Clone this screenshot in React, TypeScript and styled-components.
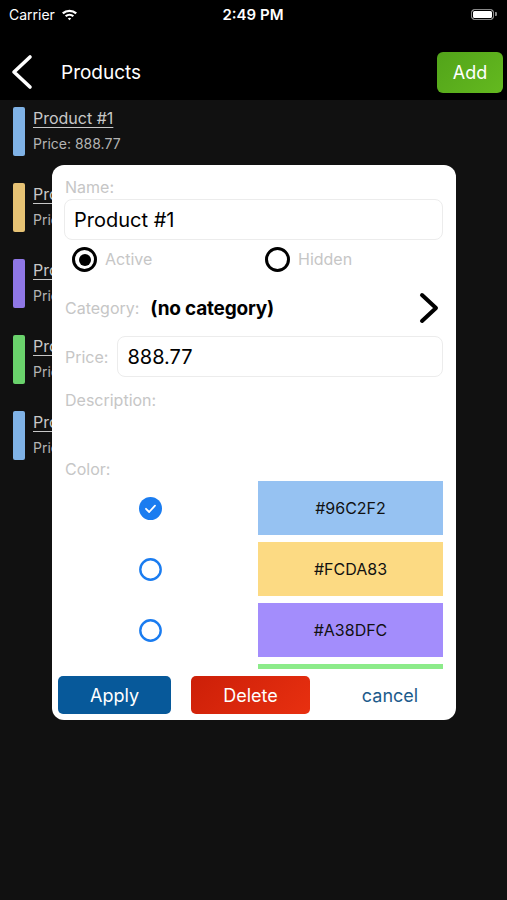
import React from 'react';
import styled, { createGlobalStyle } from 'styled-components';

type Product = { name: string; price: string; color: string };

const products: Product[] = [
    { name: 'Product #1', price: '888.77', color: '#7fb2e6' },
    { name: 'Product #2', price: '12.00', color: '#e6c274' },
    { name: 'Product #3', price: '45.10', color: '#8f77e6' },
    { name: 'Product #4', price: '9.99', color: '#6ad26c' },
    { name: 'Product #5', price: '3.50', color: '#7fb2e6' },
];

const swatches = ['#96C2F2', '#FCDA83', '#A38DFC', '#8CEB8A'];

const App: React.FC = () => {
    return (
        <Screen>
            <GlobalStyle />
            <StatusBar>
                <Carrier>
                    Carrier
                    <svg width="17" height="13" viewBox="0 0 17 13">
                        <path d="M1 4.6 A11 11 0 0 1 16 4.6 L14.4 6.2 A8.7 8.7 0 0 0 2.6 6.2 Z" fill="#fff" />
                        <path d="M3.9 7.5 A7 7 0 0 1 13.1 7.5 L11.5 9.1 A4.7 4.7 0 0 0 5.5 9.1 Z" fill="#fff" />
                        <path d="M6.8 10.4 A2.8 2.8 0 0 1 10.2 10.4 L8.5 12.2 Z" fill="#fff" />
                    </svg>
                </Carrier>
                <Clock>2:49 PM</Clock>
                <Battery>
                    <BatteryBody />
                    <BatteryNub />
                </Battery>
            </StatusBar>

            <NavBar>
                <BackButton>
                    <svg width="24" height="36" viewBox="0 0 24 36">
                        <polyline points="20,3 4,18 20,33" fill="none" stroke="#fff" strokeWidth="3.6" strokeLinecap="round" strokeLinejoin="round" />
                    </svg>
                </BackButton>
                <NavTitle>Products</NavTitle>
                <AddButton>Add</AddButton>
            </NavBar>

            <Content>
                {products.map((p) => (
                    <ListItem key={p.name}>
                        <ColorBar color={p.color} />
                        <ItemText>
                            <ItemName>{p.name}</ItemName>
                            <ItemPrice>Price: {p.price}</ItemPrice>
                        </ItemText>
                    </ListItem>
                ))}
            </Content>

            <Modal>
                <Label>Name:</Label>
                <TextBox>Product #1</TextBox>

                <RadioRow>
                    <RadioOption>
                        <Radio checked />
                        <RadioLabel>Active</RadioLabel>
                    </RadioOption>
                    <RadioOption>
                        <Radio />
                        <RadioLabel>Hidden</RadioLabel>
                    </RadioOption>
                </RadioRow>

                <CategoryRow>
                    <Label>Category:</Label>
                    <CategoryValue>(no category)</CategoryValue>
                    <svg width="22" height="32" viewBox="0 0 22 32">
                        <polyline points="4,3 18,16 4,29" fill="none" stroke="#000" strokeWidth="4" strokeLinecap="round" strokeLinejoin="round" />
                    </svg>
                </CategoryRow>

                <PriceRow>
                    <Label>Price:</Label>
                    <TextBox>888.77</TextBox>
                </PriceRow>

                <Label>Description:</Label>
                <DescriptionArea />

                <Label>Color:</Label>
                <ColorList>
                    {swatches.map((c, i) => (
                        <ColorRow key={c}>
                            <CheckCell>
                                {i === 0 ? (
                                    <svg width="23" height="23" viewBox="0 0 23 23">
                                        <circle cx="11.5" cy="11.5" r="11.5" fill="#1a7cf0" />
                                        <polyline points="7,11.8 10.2,15 16,8.6" fill="none" stroke="#fff" strokeWidth="1.8" strokeLinecap="round" strokeLinejoin="round" />
                                    </svg>
                                ) : (
                                    <svg width="23" height="23" viewBox="0 0 23 23">
                                        <circle cx="11.5" cy="11.5" r="10.2" fill="none" stroke="#1a7cf0" strokeWidth="2.4" />
                                    </svg>
                                )}
                            </CheckCell>
                            <Swatch color={c}>{c}</Swatch>
                        </ColorRow>
                    ))}
                </ColorList>

                <ButtonRow>
                    <ActionButton variant="apply">Apply</ActionButton>
                    <ActionButton variant="delete">Delete</ActionButton>
                    <CancelButton>cancel</CancelButton>
                </ButtonRow>
            </Modal>
        </Screen>
    );
};

export default App;

const GlobalStyle = createGlobalStyle`
    body {
        margin: 0;
        background: #000;
        font-family: Inter, "Liberation Sans", sans-serif;
    }
`;

const Screen = styled.div`
    position: relative;
    width: 507px;
    height: 900px;
    display: flex;
    flex-direction: column;
    background: #000;
    overflow: hidden;
`;

const StatusBar = styled.div`
    height: 28px;
    display: flex;
    align-items: center;
    justify-content: space-between;
    padding: 0 10px 0 9px;
    color: #fff;
    font-size: 14px;
`;

const Carrier = styled.div`
    display: flex;
    align-items: center;
    gap: 6px;
    width: 110px;
`;

const Clock = styled.div`
    font-weight: 600;
    font-size: 15px;
`;

const Battery = styled.div`
    width: 110px;
    display: flex;
    justify-content: flex-end;
    align-items: center;
    gap: 1px;
`;

const BatteryBody = styled.div`
    width: 21px;
    height: 9px;
    border: 1.5px solid #888;
    border-radius: 3.5px;
    background: #fff;
    box-shadow: inset 0 0 0 1px #000;
`;

const BatteryNub = styled.div`
    width: 2px;
    height: 4px;
    background: #888;
    border-radius: 0 1px 1px 0;
`;

const NavBar = styled.div`
    height: 72px;
    box-sizing: border-box;
    padding: 16px 4px 0 10px;
    display: flex;
    align-items: center;
`;

const BackButton = styled.div`
    display: flex;
    width: 51px;
`;

const NavTitle = styled.div`
    flex: 1;
    color: #fff;
    font-size: 19px;
`;

const AddButton = styled.button`
    width: 66px;
    height: 41px;
    border: none;
    border-radius: 6px;
    background: linear-gradient(135deg, #52a41a, #64b91f);
    color: #fff;
    font-family: inherit;
    font-size: 18px;
`;

const Content = styled.div`
    flex: 1;
    background: #111;
    padding-top: 7px;
`;

const ListItem = styled.div`
    height: 76px;
    display: flex;
    gap: 8px;
    padding-left: 13px;
`;

const ColorBar = styled.div<{ color: string }>`
    width: 12px;
    height: 49px;
    border-radius: 2px;
    background: ${(p) => p.color};
`;

const ItemText = styled.div`
    display: flex;
    flex-direction: column;
    gap: 7px;
    padding-top: 1px;
`;

const ItemName = styled.div`
    color: #c8c8c8;
    font-size: 16px;
    text-decoration: underline;
    text-underline-offset: 3px;
`;

const ItemPrice = styled.div`
    color: #b4b4b4;
    font-size: 14px;
`;

const Modal = styled.div`
    position: absolute;
    left: 52px;
    top: 165px;
    width: 404px;
    height: 555px;
    box-sizing: border-box;
    padding: 12px 13px 6px 12px;
    background: #fff;
    border-radius: 12px;
    display: flex;
    flex-direction: column;
`;

const Label = styled.div`
    color: #c6c6c6;
    font-size: 16px;
    line-height: 20px;
    padding-left: 1px;
`;

const TextBox = styled.div`
    flex: 1;
    height: 41px;
    box-sizing: border-box;
    margin-top: 2px;
    padding-left: 9px;
    display: flex;
    align-items: center;
    border: 1px solid #ececec;
    border-radius: 8px;
    font-size: 20px;
    color: #000;
`;

const RadioRow = styled.div`
    display: grid;
    grid-template-columns: 193px 1fr;
    padding-left: 8px;
    margin-top: 7px;
`;

const RadioOption = styled.div`
    display: flex;
    align-items: center;
    gap: 8px;
`;

const Radio = styled.div<{ checked?: boolean }>`
    width: 25px;
    height: 25px;
    box-sizing: border-box;
    border: 3px solid #000;
    border-radius: 50%;
    display: flex;
    align-items: center;
    justify-content: center;
    &::after {
        content: '';
        width: 12px;
        height: 12px;
        border-radius: 50%;
        background: ${(p) => (p.checked ? '#000' : 'transparent')};
    }
`;

const RadioLabel = styled.div`
    color: #c6c6c6;
    font-size: 16px;
    margin-top: -2px;
`;

const CategoryRow = styled.div`
    height: 34px;
    margin-top: 19px;
    display: flex;
    align-items: center;
    gap: 11px;
    svg {
        margin-left: auto;
        margin-right: 3px;
    }
`;

const CategoryValue = styled.div`
    font-size: 19px;
    font-weight: 700;
    letter-spacing: -0.2px;
    color: #000;
`;

const PriceRow = styled.div`
    display: flex;
    align-items: center;
    gap: 9px;
    margin-top: 11px;
    margin-bottom: 13px;
    ${TextBox} {
        margin-top: 0;
    }
`;

const DescriptionArea = styled.div`
    height: 49px;
`;

const ColorList = styled.div`
    height: 188px;
    margin-top: 2px;
    overflow: hidden;
    display: flex;
    flex-direction: column;
    gap: 7px;
`;

const ColorRow = styled.div`
    display: grid;
    grid-template-columns: 172px 185px;
    gap: 22px;
    flex-shrink: 0;
`;

const CheckCell = styled.div`
    display: flex;
    align-items: center;
    justify-content: center;
`;

const Swatch = styled.div<{ color: string }>`
    height: 54px;
    background: ${(p) => p.color};
    display: flex;
    align-items: center;
    justify-content: center;
    color: #111;
    font-size: 16px;
`;

const ButtonRow = styled.div`
    display: flex;
    align-items: center;
    gap: 20px;
    margin: 7px 0 0 -6px;
`;

const ActionButton = styled.button<{ variant: 'apply' | 'delete' }>`
    width: ${(p) => (p.variant === 'apply' ? '113px' : '119px')};
    height: 38px;
    border: none;
    border-radius: 5px;
    background: ${(p) =>
        p.variant === 'apply' ? '#07599a' : 'linear-gradient(135deg, #cc1f08, #e83010)'};
    color: #fff;
    font-family: inherit;
    font-size: 18px;
`;

const CancelButton = styled.button`
    width: 100px;
    height: 38px;
    margin-left: 10px;
    padding: 0;
    border: none;
    background: none;
    color: #1c5b8c;
    font-family: inherit;
    font-size: 18px;
`;
